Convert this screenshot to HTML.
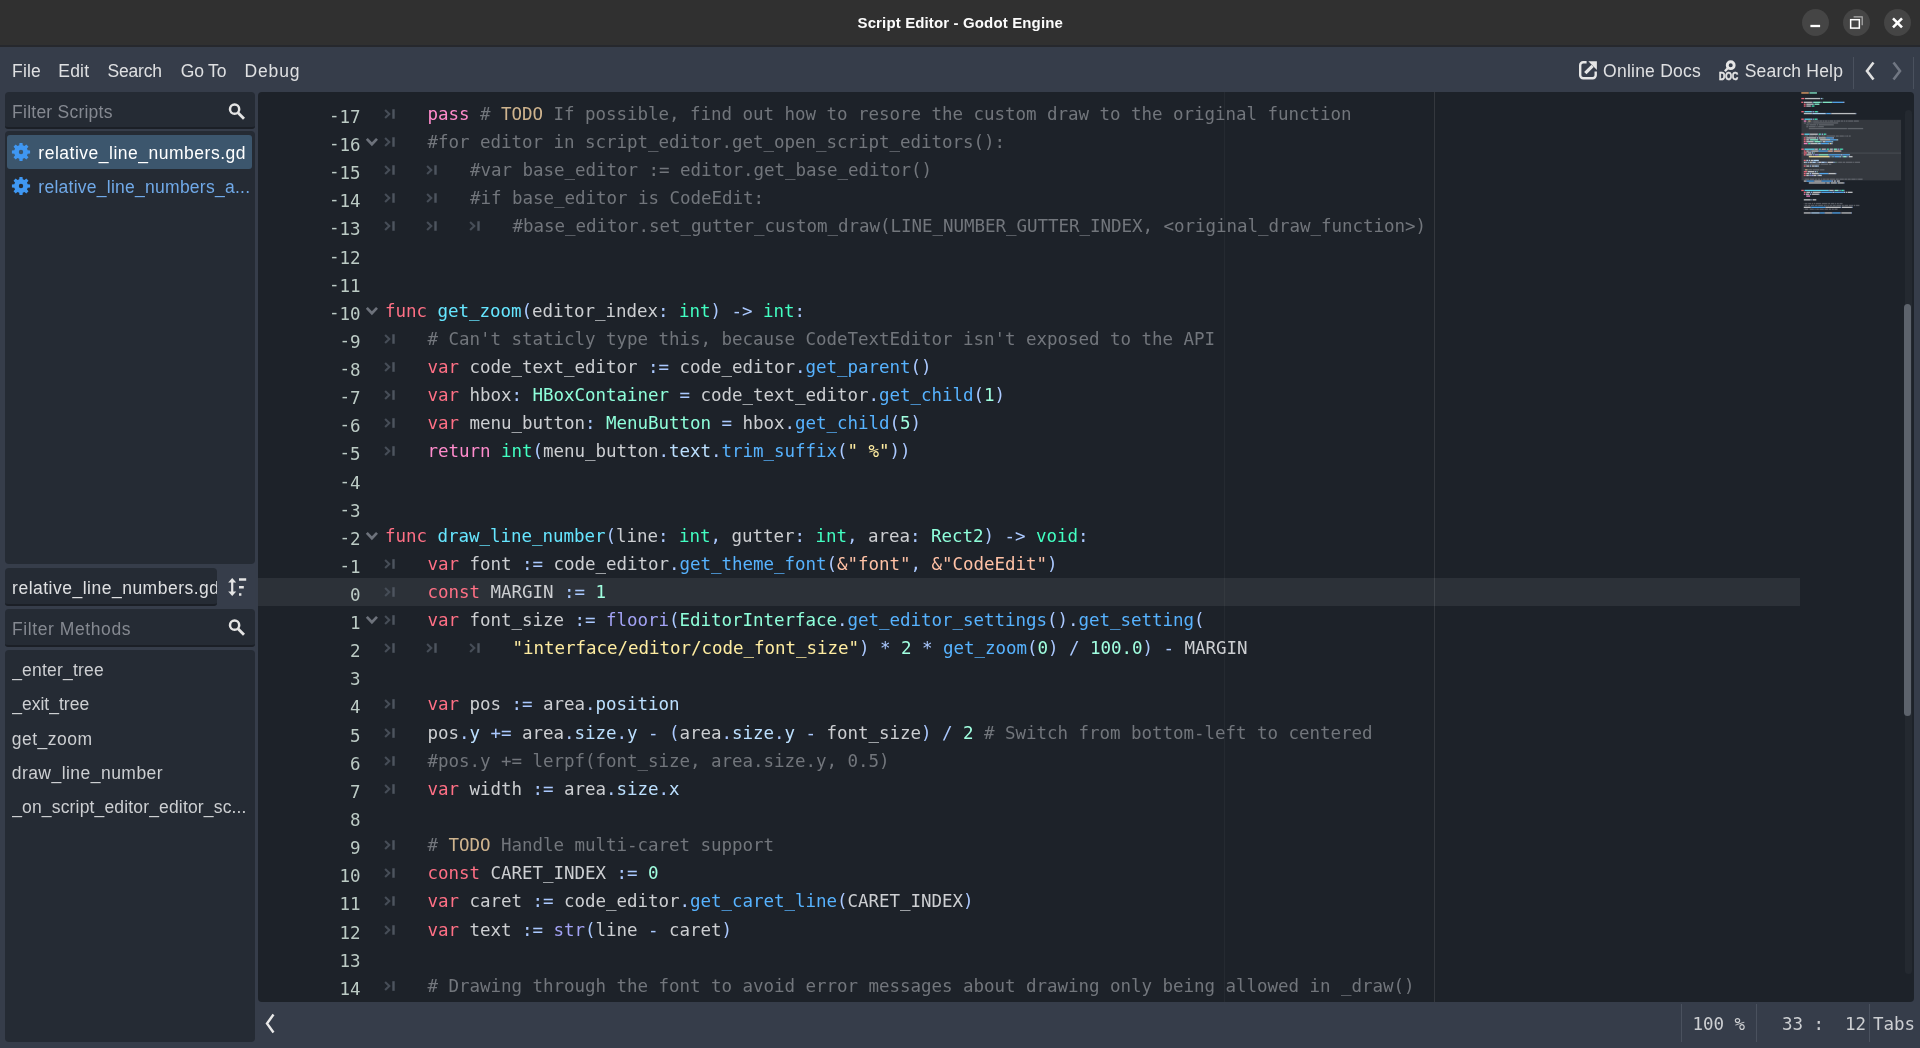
<!DOCTYPE html>
<html lang="en"><head><meta charset="utf-8"><title>Script Editor - Godot Engine</title>
<style>
*{box-sizing:border-box;margin:0;padding:0}
html,body{width:1920px;height:1048px;overflow:hidden;background:#363d4a}
body{position:relative;font-family:"Liberation Sans", sans-serif;font-size:17.5px;color:#cdcfd2}
#root{position:absolute;left:0;top:0;width:1920px;height:1048px;will-change:transform}
.abs{position:absolute}
.ux{position:absolute;line-height:24px;height:24px;white-space:pre}
#title{position:absolute;left:0;top:0;width:1920px;height:45px;background:#303030}
#tline{position:absolute;left:0;top:45px;width:1920px;height:2px;background:#26282d}
.wb{position:absolute;top:9px;width:27px;height:27px;border-radius:50%;background:#454545}
.wb svg{position:absolute;left:0;top:0}
.panel{position:absolute;background:#252b34;border-radius:4px}
.le{position:absolute;background:#252b34;border-radius:4px 4px 3px 3px;border-bottom:2px solid #1b1f26}
#ed{position:absolute;left:258px;top:92px;width:1656px;height:910px;background:#1d2229;border-radius:4px;overflow:hidden}
#edi{position:absolute;left:-258px;top:-92px;width:1920px;height:1048px;font-family:"DejaVu Sans Mono", "Liberation Mono", monospace;font-size:17.5px;letter-spacing:-0.036px}
.cl{position:absolute;height:28px;line-height:28px;white-space:pre}
.ln{position:absolute;left:260px;width:100.5px;text-align:right;height:28px;line-height:28px;white-space:pre;color:#bccbc5}
.mn{position:relative;top:-1.3px}
.tb,.fd{position:absolute}
.t{color:#cdcfd2}.k{color:#ff7085}.c{color:#ff8ccc}.m{color:#72767c}.w{color:#cfb48e}.d{color:#66e6ff}
.b{color:#42ffc2}.e{color:#8fffdb}.f{color:#57b3ff}.s{color:#abc9ff}.n{color:#a1ffe0}.g{color:#ffeda1}
.q{color:#ffc2a6}.u{color:#a3a3f5}.v{color:#bce0ff}
.st{position:absolute;top:1009.5px;line-height:28px;font-family:"DejaVu Sans Mono", "Liberation Mono", monospace;font-size:17.5px;letter-spacing:-0.036px;color:#cdcfd2;white-space:pre}
.vs{position:absolute;width:1px;background:#4a515e}
</style></head><body><div id="root">
<div id="title">
<div class="wb" style="left:1802px"><svg width="27" height="27" viewBox="0 0 27 27"><path d="M8.4 17h9.7" stroke="#fff" stroke-width="2.3"/></svg></div>
<div class="wb" style="left:1843px"><svg width="27" height="27" viewBox="0 0 27 27"><rect x="7.65" y="10.7" width="8.7" height="8.4" fill="none" stroke="#fff" stroke-width="1.5"/><path d="M10.6 7.9h8.6v8.4" fill="none" stroke="#b0b0b0" stroke-width="1.2"/></svg></div>
<div class="wb" style="left:1884px"><svg width="27" height="27" viewBox="0 0 27 27"><path d="M9 9.3 18 18.3M18 9.3 9 18.3" stroke="#fff" stroke-width="2.6"/></svg></div>
</div>
<div class="ux" style="left:857.50px;top:11px;font-size:15px;font-weight:bold;letter-spacing:0.136px;color:#fcfcfc;">Script Editor - Godot Engine</div>
<div id="tline"></div>

<!-- menu bar -->
<div class="ux" style="left:12.10px;top:59px;font-size:17.5px;font-weight:normal;letter-spacing:0.111px;color:#dfe0e2;">File</div>
<div class="ux" style="left:58.30px;top:59px;font-size:17.5px;font-weight:normal;letter-spacing:0.202px;color:#dfe0e2;">Edit</div>
<div class="ux" style="left:107.40px;top:59px;font-size:17.5px;font-weight:normal;letter-spacing:-0.163px;color:#dfe0e2;">Search</div>
<div class="ux" style="left:180.80px;top:59px;font-size:17.5px;font-weight:normal;letter-spacing:-0.189px;color:#dfe0e2;">Go To</div>
<div class="ux" style="left:244.50px;top:59px;font-size:17.5px;font-weight:normal;letter-spacing:0.866px;color:#dfe0e2;">Debug</div>
<svg class="abs" style="left:1578.6px;top:60.8px" width="19" height="19" viewBox="0 0 19 19"><path d="M7.6 1.3H4.2A3 3 0 0 0 1.2 4.3V14.2A3 3 0 0 0 4.2 17.2H13.7A3 3 0 0 0 16.7 14.2V10.4" fill="none" stroke="#e6e6e6" stroke-width="2.4"/><path d="M9.3 0.3H17.9V9.1z" fill="#e6e6e6"/><path d="M6.3 12.1 13.6 4.8" stroke="#e6e6e6" stroke-width="3.3"/></svg>
<div class="ux" style="left:1603.10px;top:59px;font-size:17.5px;font-weight:normal;letter-spacing:0.233px;color:#dfe0e2;">Online Docs</div>
<svg class="abs" style="left:1718px;top:59px" width="22" height="23" viewBox="0 0 22 23"><circle cx="12.7" cy="6.2" r="3.45" fill="none" stroke="#e6e6e6" stroke-width="2.9"/><path d="M10.2 8.8 6.9 12.3" stroke="#e6e6e6" stroke-width="2.4"/><text x="1.1" y="21.2" font-family="Liberation Sans, sans-serif" font-weight="bold" font-size="10" fill="#e6e6e6" stroke="#e6e6e6" stroke-width="0.5" textLength="19.3" lengthAdjust="spacingAndGlyphs">DOC</text></svg>
<div class="ux" style="left:1744.70px;top:59px;font-size:17.5px;font-weight:normal;letter-spacing:0.193px;color:#dfe0e2;">Search Help</div>
<div class="vs" style="left:1853px;top:57px;height:32px"></div>
<div class="vs" style="left:1913px;top:57px;height:32px"></div>
<svg class="abs" style="left:1863px;top:60px" width="14" height="22" viewBox="0 0 14 22"><path d="M10.5 2.5 4 11l6.5 8.5" fill="none" stroke="#e0e0e0" stroke-width="2.6"/></svg>
<svg class="abs" style="left:1890px;top:60px" width="14" height="22" viewBox="0 0 14 22"><path d="M3.5 2.5 10 11l-6.5 8.5" fill="none" stroke="#717783" stroke-width="2.6"/></svg>

<!-- left column -->
<div class="le" style="left:5px;top:92px;width:250px;height:37px"></div>
<div class="ux" style="left:12.10px;top:100px;font-size:17.5px;font-weight:normal;letter-spacing:0.240px;color:#858991;">Filter Scripts</div>
<svg class="abs" style="left:227px;top:102px" width="20" height="20" viewBox="0 0 20 20"><circle cx="7.6" cy="7.2" r="4.6" fill="none" stroke="#e4e4e4" stroke-width="2.5"/><path d="M11 10.8 17 16.8" stroke="#e4e4e4" stroke-width="2.9"/></svg>
<div class="panel" style="left:5px;top:131px;width:250px;height:433px"></div>
<div class="abs" style="left:7px;top:135px;width:245px;height:34px;background:#3c566d;border-radius:3px"></div>
<svg class="abs" style="left:11.3px;top:142px" width="20" height="20" viewBox="0 0 20 20"><path fill-rule="evenodd" fill="#3f97f2" d="M16.67 8.23 L19.08 8.49 L19.08 11.51 L16.67 11.77 L15.97 13.47 L17.49 15.35 L15.35 17.49 L13.47 15.97 L11.77 16.67 L11.51 19.08 L8.49 19.08 L8.23 16.67 L6.53 15.97 L4.65 17.49 L2.51 15.35 L4.03 13.47 L3.33 11.77 L0.92 11.51 L0.92 8.49 L3.33 8.23 L4.03 6.53 L2.51 4.65 L4.65 2.51 L6.53 4.03 L8.23 3.33 L8.49 0.92 L11.51 0.92 L11.77 3.33 L13.47 4.03 L15.35 2.51 L17.49 4.65 L15.97 6.53Z M12.20 10.00 A2.2 2.2 0 1 0 7.80 10.00 A2.2 2.2 0 1 0 12.20 10.00Z"/></svg>
<div class="ux" style="left:38.30px;top:141px;font-size:17.5px;font-weight:normal;letter-spacing:0.509px;color:#fff;">relative_line_numbers.gd</div>
<svg class="abs" style="left:11.3px;top:176.2px" width="20" height="20" viewBox="0 0 20 20"><path fill-rule="evenodd" fill="#3f97f2" d="M16.67 8.23 L19.08 8.49 L19.08 11.51 L16.67 11.77 L15.97 13.47 L17.49 15.35 L15.35 17.49 L13.47 15.97 L11.77 16.67 L11.51 19.08 L8.49 19.08 L8.23 16.67 L6.53 15.97 L4.65 17.49 L2.51 15.35 L4.03 13.47 L3.33 11.77 L0.92 11.51 L0.92 8.49 L3.33 8.23 L4.03 6.53 L2.51 4.65 L4.65 2.51 L6.53 4.03 L8.23 3.33 L8.49 0.92 L11.51 0.92 L11.77 3.33 L13.47 4.03 L15.35 2.51 L17.49 4.65 L15.97 6.53Z M12.20 10.00 A2.2 2.2 0 1 0 7.80 10.00 A2.2 2.2 0 1 0 12.20 10.00Z"/></svg>
<div class="ux" style="left:38.30px;top:175px;font-size:17.5px;font-weight:normal;letter-spacing:0.260px;color:#70a9e8;">relative_line_numbers_a...</div>

<div class="le" style="left:5px;top:568px;width:212px;height:38px"></div>
<div class="abs" style="left:5px;top:570px;width:212px;height:34px;overflow:hidden"><div class="abs" style="left:-5px;top:-570px;width:300px;height:700px">
<div class="ux" style="left:12.10px;top:576px;font-size:17.5px;font-weight:normal;letter-spacing:0.496px;color:#dfe0e2;">relative_line_numbers.gd</div>
</div></div>
<svg class="abs" style="left:226px;top:576px" width="22" height="22" viewBox="0 0 22 22"><path d="M6.2 2 2.2 6.6h2.9v8.8H2.2L6.2 20l4-4.6H7.3V6.6h2.9z" fill="#e4e4e4"/><path d="M13 3.6h7.2M13 11.2h4.8M13 18.6h2.4" stroke="#e4e4e4" stroke-width="2.5"/></svg>
<div class="le" style="left:5px;top:609px;width:250px;height:38px"></div>
<div class="ux" style="left:12.10px;top:617px;font-size:17.5px;font-weight:normal;letter-spacing:0.575px;color:#858991;">Filter Methods</div>
<svg class="abs" style="left:227px;top:618px" width="20" height="20" viewBox="0 0 20 20"><circle cx="7.6" cy="7.2" r="4.6" fill="none" stroke="#e4e4e4" stroke-width="2.5"/><path d="M11 10.8 17 16.8" stroke="#e4e4e4" stroke-width="2.9"/></svg>
<div class="panel" style="left:5px;top:650px;width:250px;height:392px"></div>
<div class="ux" style="left:12.20px;top:658px;font-size:17.5px;font-weight:normal;letter-spacing:0.202px;color:#cdcfd2;">_enter_tree</div>
<div class="ux" style="left:12.20px;top:692px;font-size:17.5px;font-weight:normal;letter-spacing:0.009px;color:#cdcfd2;">_exit_tree</div>
<div class="ux" style="left:11.70px;top:727px;font-size:17.5px;font-weight:normal;letter-spacing:0.489px;color:#cdcfd2;">get_zoom</div>
<div class="ux" style="left:11.70px;top:761px;font-size:17.5px;font-weight:normal;letter-spacing:0.464px;color:#cdcfd2;">draw_line_number</div>
<div class="ux" style="left:12.20px;top:795px;font-size:17.5px;font-weight:normal;letter-spacing:0.162px;color:#cdcfd2;">_on_script_editor_editor_sc...</div>

<!-- code editor -->
<div id="ed"><div id="edi">
<div class="abs" style="left:258px;top:578px;width:1542px;height:28px;background:rgba(255,255,255,0.07)"></div>
<div class="abs" style="left:1224px;top:92px;width:1px;height:910px;background:rgba(255,255,255,0.04)"></div>
<div class="abs" style="left:1434px;top:92px;width:1px;height:910px;background:rgba(255,255,255,0.10)"></div>
<div class="ln" style="top:102.5px"><span class="mn">-</span>17</div>
<svg class="tb" style="left:383.8px;top:107.6px" width="12" height="12" viewBox="0 0 12 12"><path d="M1.1 1.9 5.3 6 1.1 10.1" fill="none" stroke="#464d57" stroke-width="2.1"/><path d="M9.5 1.2v9.6" stroke="#4e555f" stroke-width="2.4"/></svg>
<div class="cl" style="top:100px;left:427.5px"><span class="c">pass</span><span class="t"> </span><span class="m"># </span><span class="w">TODO</span><span class="m"> If possible, find out how to resore the custom draw to the original function</span></div>
<div class="ln" style="top:130.5px"><span class="mn">-</span>16</div>
<svg class="fd" style="left:365px;top:137px" width="14" height="11" viewBox="0 0 14 11"><path d="M1.8 1.9 6.9 7.3 12 1.9" fill="none" stroke="#6d727b" stroke-width="2.7"/></svg>
<svg class="tb" style="left:383.8px;top:135.6px" width="12" height="12" viewBox="0 0 12 12"><path d="M1.1 1.9 5.3 6 1.1 10.1" fill="none" stroke="#464d57" stroke-width="2.1"/><path d="M9.5 1.2v9.6" stroke="#4e555f" stroke-width="2.4"/></svg>
<div class="cl" style="top:128px;left:427.5px"><span class="m">#for editor in script_editor.get_open_script_editors():</span></div>
<div class="ln" style="top:158.5px"><span class="mn">-</span>15</div>
<svg class="tb" style="left:383.8px;top:163.6px" width="12" height="12" viewBox="0 0 12 12"><path d="M1.1 1.9 5.3 6 1.1 10.1" fill="none" stroke="#464d57" stroke-width="2.1"/><path d="M9.5 1.2v9.6" stroke="#4e555f" stroke-width="2.4"/></svg>
<svg class="tb" style="left:426.3px;top:163.6px" width="12" height="12" viewBox="0 0 12 12"><path d="M1.1 1.9 5.3 6 1.1 10.1" fill="none" stroke="#464d57" stroke-width="2.1"/><path d="M9.5 1.2v9.6" stroke="#4e555f" stroke-width="2.4"/></svg>
<div class="cl" style="top:156px;left:470.0px"><span class="m">#var base_editor := editor.get_base_editor()</span></div>
<div class="ln" style="top:186.5px"><span class="mn">-</span>14</div>
<svg class="tb" style="left:383.8px;top:191.6px" width="12" height="12" viewBox="0 0 12 12"><path d="M1.1 1.9 5.3 6 1.1 10.1" fill="none" stroke="#464d57" stroke-width="2.1"/><path d="M9.5 1.2v9.6" stroke="#4e555f" stroke-width="2.4"/></svg>
<svg class="tb" style="left:426.3px;top:191.6px" width="12" height="12" viewBox="0 0 12 12"><path d="M1.1 1.9 5.3 6 1.1 10.1" fill="none" stroke="#464d57" stroke-width="2.1"/><path d="M9.5 1.2v9.6" stroke="#4e555f" stroke-width="2.4"/></svg>
<div class="cl" style="top:184px;left:470.0px"><span class="m">#if base_editor is CodeEdit:</span></div>
<div class="ln" style="top:214.5px"><span class="mn">-</span>13</div>
<svg class="tb" style="left:383.8px;top:219.6px" width="12" height="12" viewBox="0 0 12 12"><path d="M1.1 1.9 5.3 6 1.1 10.1" fill="none" stroke="#464d57" stroke-width="2.1"/><path d="M9.5 1.2v9.6" stroke="#4e555f" stroke-width="2.4"/></svg>
<svg class="tb" style="left:426.3px;top:219.6px" width="12" height="12" viewBox="0 0 12 12"><path d="M1.1 1.9 5.3 6 1.1 10.1" fill="none" stroke="#464d57" stroke-width="2.1"/><path d="M9.5 1.2v9.6" stroke="#4e555f" stroke-width="2.4"/></svg>
<svg class="tb" style="left:468.8px;top:219.6px" width="12" height="12" viewBox="0 0 12 12"><path d="M1.1 1.9 5.3 6 1.1 10.1" fill="none" stroke="#464d57" stroke-width="2.1"/><path d="M9.5 1.2v9.6" stroke="#4e555f" stroke-width="2.4"/></svg>
<div class="cl" style="top:212px;left:512.5px"><span class="m">#base_editor.set_gutter_custom_draw(LINE_NUMBER_GUTTER_INDEX, &lt;original_draw_function&gt;)</span></div>
<div class="ln" style="top:243.5px"><span class="mn">-</span>12</div>
<div class="ln" style="top:271.5px"><span class="mn">-</span>11</div>
<div class="ln" style="top:299.5px"><span class="mn">-</span>10</div>
<svg class="fd" style="left:365px;top:306px" width="14" height="11" viewBox="0 0 14 11"><path d="M1.8 1.9 6.9 7.3 12 1.9" fill="none" stroke="#6d727b" stroke-width="2.7"/></svg>
<div class="cl" style="top:297px;left:385.0px"><span class="k">func</span><span class="t"> </span><span class="d">get_zoom</span><span class="s">(</span><span class="t">editor_index</span><span class="s">:</span><span class="t"> </span><span class="b">int</span><span class="s">)</span><span class="t"> </span><span class="s">-&gt;</span><span class="t"> </span><span class="b">int</span><span class="s">:</span></div>
<div class="ln" style="top:327.5px"><span class="mn">-</span>9</div>
<svg class="tb" style="left:383.8px;top:332.6px" width="12" height="12" viewBox="0 0 12 12"><path d="M1.1 1.9 5.3 6 1.1 10.1" fill="none" stroke="#464d57" stroke-width="2.1"/><path d="M9.5 1.2v9.6" stroke="#4e555f" stroke-width="2.4"/></svg>
<div class="cl" style="top:325px;left:427.5px"><span class="m"># Can't staticly type this, because CodeTextEditor isn't exposed to the API</span></div>
<div class="ln" style="top:355.5px"><span class="mn">-</span>8</div>
<svg class="tb" style="left:383.8px;top:360.6px" width="12" height="12" viewBox="0 0 12 12"><path d="M1.1 1.9 5.3 6 1.1 10.1" fill="none" stroke="#464d57" stroke-width="2.1"/><path d="M9.5 1.2v9.6" stroke="#4e555f" stroke-width="2.4"/></svg>
<div class="cl" style="top:353px;left:427.5px"><span class="k">var</span><span class="t"> code_text_editor </span><span class="s">:=</span><span class="t"> code_editor</span><span class="s">.</span><span class="f">get_parent</span><span class="s">()</span></div>
<div class="ln" style="top:383.5px"><span class="mn">-</span>7</div>
<svg class="tb" style="left:383.8px;top:388.6px" width="12" height="12" viewBox="0 0 12 12"><path d="M1.1 1.9 5.3 6 1.1 10.1" fill="none" stroke="#464d57" stroke-width="2.1"/><path d="M9.5 1.2v9.6" stroke="#4e555f" stroke-width="2.4"/></svg>
<div class="cl" style="top:381px;left:427.5px"><span class="k">var</span><span class="t"> hbox</span><span class="s">:</span><span class="t"> </span><span class="e">HBoxContainer</span><span class="t"> </span><span class="s">=</span><span class="t"> code_text_editor</span><span class="s">.</span><span class="f">get_child</span><span class="s">(</span><span class="n">1</span><span class="s">)</span></div>
<div class="ln" style="top:411.5px"><span class="mn">-</span>6</div>
<svg class="tb" style="left:383.8px;top:416.6px" width="12" height="12" viewBox="0 0 12 12"><path d="M1.1 1.9 5.3 6 1.1 10.1" fill="none" stroke="#464d57" stroke-width="2.1"/><path d="M9.5 1.2v9.6" stroke="#4e555f" stroke-width="2.4"/></svg>
<div class="cl" style="top:409px;left:427.5px"><span class="k">var</span><span class="t"> menu_button</span><span class="s">:</span><span class="t"> </span><span class="e">MenuButton</span><span class="t"> </span><span class="s">=</span><span class="t"> hbox</span><span class="s">.</span><span class="f">get_child</span><span class="s">(</span><span class="n">5</span><span class="s">)</span></div>
<div class="ln" style="top:439.5px"><span class="mn">-</span>5</div>
<svg class="tb" style="left:383.8px;top:444.6px" width="12" height="12" viewBox="0 0 12 12"><path d="M1.1 1.9 5.3 6 1.1 10.1" fill="none" stroke="#464d57" stroke-width="2.1"/><path d="M9.5 1.2v9.6" stroke="#4e555f" stroke-width="2.4"/></svg>
<div class="cl" style="top:437px;left:427.5px"><span class="c">return</span><span class="t"> </span><span class="b">int</span><span class="s">(</span><span class="t">menu_button</span><span class="s">.</span><span class="v">text</span><span class="s">.</span><span class="f">trim_suffix</span><span class="s">(</span><span class="g">" %"</span><span class="s">))</span></div>
<div class="ln" style="top:468.5px"><span class="mn">-</span>4</div>
<div class="ln" style="top:496.5px"><span class="mn">-</span>3</div>
<div class="ln" style="top:524.5px"><span class="mn">-</span>2</div>
<svg class="fd" style="left:365px;top:531px" width="14" height="11" viewBox="0 0 14 11"><path d="M1.8 1.9 6.9 7.3 12 1.9" fill="none" stroke="#6d727b" stroke-width="2.7"/></svg>
<div class="cl" style="top:522px;left:385.0px"><span class="k">func</span><span class="t"> </span><span class="d">draw_line_number</span><span class="s">(</span><span class="t">line</span><span class="s">:</span><span class="t"> </span><span class="b">int</span><span class="s">,</span><span class="t"> gutter</span><span class="s">:</span><span class="t"> </span><span class="b">int</span><span class="s">,</span><span class="t"> area</span><span class="s">:</span><span class="t"> </span><span class="e">Rect2</span><span class="s">)</span><span class="t"> </span><span class="s">-&gt;</span><span class="t"> </span><span class="b">void</span><span class="s">:</span></div>
<div class="ln" style="top:552.5px"><span class="mn">-</span>1</div>
<svg class="tb" style="left:383.8px;top:557.6px" width="12" height="12" viewBox="0 0 12 12"><path d="M1.1 1.9 5.3 6 1.1 10.1" fill="none" stroke="#464d57" stroke-width="2.1"/><path d="M9.5 1.2v9.6" stroke="#4e555f" stroke-width="2.4"/></svg>
<div class="cl" style="top:550px;left:427.5px"><span class="k">var</span><span class="t"> font </span><span class="s">:=</span><span class="t"> code_editor</span><span class="s">.</span><span class="f">get_theme_font</span><span class="s">(</span><span class="q">&amp;"font"</span><span class="s">,</span><span class="t"> </span><span class="q">&amp;"CodeEdit"</span><span class="s">)</span></div>
<div class="ln" style="top:580.5px">0</div>
<svg class="tb" style="left:383.8px;top:585.6px" width="12" height="12" viewBox="0 0 12 12"><path d="M1.1 1.9 5.3 6 1.1 10.1" fill="none" stroke="#464d57" stroke-width="2.1"/><path d="M9.5 1.2v9.6" stroke="#4e555f" stroke-width="2.4"/></svg>
<div class="cl" style="top:578px;left:427.5px"><span class="k">const</span><span class="t"> MARGIN </span><span class="s">:=</span><span class="t"> </span><span class="n">1</span></div>
<div class="ln" style="top:608.5px">1</div>
<svg class="fd" style="left:365px;top:615px" width="14" height="11" viewBox="0 0 14 11"><path d="M1.8 1.9 6.9 7.3 12 1.9" fill="none" stroke="#6d727b" stroke-width="2.7"/></svg>
<svg class="tb" style="left:383.8px;top:613.6px" width="12" height="12" viewBox="0 0 12 12"><path d="M1.1 1.9 5.3 6 1.1 10.1" fill="none" stroke="#464d57" stroke-width="2.1"/><path d="M9.5 1.2v9.6" stroke="#4e555f" stroke-width="2.4"/></svg>
<div class="cl" style="top:606px;left:427.5px"><span class="k">var</span><span class="t"> font_size </span><span class="s">:=</span><span class="t"> </span><span class="u">floori</span><span class="s">(</span><span class="e">EditorInterface</span><span class="s">.</span><span class="f">get_editor_settings</span><span class="s">().</span><span class="f">get_setting</span><span class="s">(</span></div>
<div class="ln" style="top:636.5px">2</div>
<svg class="tb" style="left:383.8px;top:641.6px" width="12" height="12" viewBox="0 0 12 12"><path d="M1.1 1.9 5.3 6 1.1 10.1" fill="none" stroke="#464d57" stroke-width="2.1"/><path d="M9.5 1.2v9.6" stroke="#4e555f" stroke-width="2.4"/></svg>
<svg class="tb" style="left:426.3px;top:641.6px" width="12" height="12" viewBox="0 0 12 12"><path d="M1.1 1.9 5.3 6 1.1 10.1" fill="none" stroke="#464d57" stroke-width="2.1"/><path d="M9.5 1.2v9.6" stroke="#4e555f" stroke-width="2.4"/></svg>
<svg class="tb" style="left:468.8px;top:641.6px" width="12" height="12" viewBox="0 0 12 12"><path d="M1.1 1.9 5.3 6 1.1 10.1" fill="none" stroke="#464d57" stroke-width="2.1"/><path d="M9.5 1.2v9.6" stroke="#4e555f" stroke-width="2.4"/></svg>
<div class="cl" style="top:634px;left:512.5px"><span class="g">"interface/editor/code_font_size"</span><span class="s">)</span><span class="t"> </span><span class="s">*</span><span class="t"> </span><span class="n">2</span><span class="t"> </span><span class="s">*</span><span class="t"> </span><span class="f">get_zoom</span><span class="s">(</span><span class="n">0</span><span class="s">)</span><span class="t"> </span><span class="s">/</span><span class="t"> </span><span class="n">100.0</span><span class="s">)</span><span class="t"> </span><span class="s">-</span><span class="t"> MARGIN</span></div>
<div class="ln" style="top:664.5px">3</div>
<div class="ln" style="top:692.5px">4</div>
<svg class="tb" style="left:383.8px;top:697.6px" width="12" height="12" viewBox="0 0 12 12"><path d="M1.1 1.9 5.3 6 1.1 10.1" fill="none" stroke="#464d57" stroke-width="2.1"/><path d="M9.5 1.2v9.6" stroke="#4e555f" stroke-width="2.4"/></svg>
<div class="cl" style="top:690px;left:427.5px"><span class="k">var</span><span class="t"> pos </span><span class="s">:=</span><span class="t"> area</span><span class="s">.</span><span class="v">position</span></div>
<div class="ln" style="top:721.5px">5</div>
<svg class="tb" style="left:383.8px;top:726.6px" width="12" height="12" viewBox="0 0 12 12"><path d="M1.1 1.9 5.3 6 1.1 10.1" fill="none" stroke="#464d57" stroke-width="2.1"/><path d="M9.5 1.2v9.6" stroke="#4e555f" stroke-width="2.4"/></svg>
<div class="cl" style="top:719px;left:427.5px"><span class="t">pos</span><span class="s">.</span><span class="v">y</span><span class="t"> </span><span class="s">+=</span><span class="t"> area</span><span class="s">.</span><span class="v">size</span><span class="s">.</span><span class="v">y</span><span class="t"> </span><span class="s">-</span><span class="t"> </span><span class="s">(</span><span class="t">area</span><span class="s">.</span><span class="v">size</span><span class="s">.</span><span class="v">y</span><span class="t"> </span><span class="s">-</span><span class="t"> font_size</span><span class="s">)</span><span class="t"> </span><span class="s">/</span><span class="t"> </span><span class="n">2</span><span class="t"> </span><span class="m"># Switch from bottom-left to centered</span></div>
<div class="ln" style="top:749.5px">6</div>
<svg class="tb" style="left:383.8px;top:754.6px" width="12" height="12" viewBox="0 0 12 12"><path d="M1.1 1.9 5.3 6 1.1 10.1" fill="none" stroke="#464d57" stroke-width="2.1"/><path d="M9.5 1.2v9.6" stroke="#4e555f" stroke-width="2.4"/></svg>
<div class="cl" style="top:747px;left:427.5px"><span class="m">#pos.y += lerpf(font_size, area.size.y, 0.5)</span></div>
<div class="ln" style="top:777.5px">7</div>
<svg class="tb" style="left:383.8px;top:782.6px" width="12" height="12" viewBox="0 0 12 12"><path d="M1.1 1.9 5.3 6 1.1 10.1" fill="none" stroke="#464d57" stroke-width="2.1"/><path d="M9.5 1.2v9.6" stroke="#4e555f" stroke-width="2.4"/></svg>
<div class="cl" style="top:775px;left:427.5px"><span class="k">var</span><span class="t"> width </span><span class="s">:=</span><span class="t"> area</span><span class="s">.</span><span class="v">size</span><span class="s">.</span><span class="v">x</span></div>
<div class="ln" style="top:805.5px">8</div>
<div class="ln" style="top:833.5px">9</div>
<svg class="tb" style="left:383.8px;top:838.6px" width="12" height="12" viewBox="0 0 12 12"><path d="M1.1 1.9 5.3 6 1.1 10.1" fill="none" stroke="#464d57" stroke-width="2.1"/><path d="M9.5 1.2v9.6" stroke="#4e555f" stroke-width="2.4"/></svg>
<div class="cl" style="top:831px;left:427.5px"><span class="m"># </span><span class="w">TODO</span><span class="m"> Handle multi-caret support</span></div>
<div class="ln" style="top:861.5px">10</div>
<svg class="tb" style="left:383.8px;top:866.6px" width="12" height="12" viewBox="0 0 12 12"><path d="M1.1 1.9 5.3 6 1.1 10.1" fill="none" stroke="#464d57" stroke-width="2.1"/><path d="M9.5 1.2v9.6" stroke="#4e555f" stroke-width="2.4"/></svg>
<div class="cl" style="top:859px;left:427.5px"><span class="k">const</span><span class="t"> CARET_INDEX </span><span class="s">:=</span><span class="t"> </span><span class="n">0</span></div>
<div class="ln" style="top:889.5px">11</div>
<svg class="tb" style="left:383.8px;top:894.6px" width="12" height="12" viewBox="0 0 12 12"><path d="M1.1 1.9 5.3 6 1.1 10.1" fill="none" stroke="#464d57" stroke-width="2.1"/><path d="M9.5 1.2v9.6" stroke="#4e555f" stroke-width="2.4"/></svg>
<div class="cl" style="top:887px;left:427.5px"><span class="k">var</span><span class="t"> caret </span><span class="s">:=</span><span class="t"> code_editor</span><span class="s">.</span><span class="f">get_caret_line</span><span class="s">(</span><span class="t">CARET_INDEX</span><span class="s">)</span></div>
<div class="ln" style="top:918.5px">12</div>
<svg class="tb" style="left:383.8px;top:923.6px" width="12" height="12" viewBox="0 0 12 12"><path d="M1.1 1.9 5.3 6 1.1 10.1" fill="none" stroke="#464d57" stroke-width="2.1"/><path d="M9.5 1.2v9.6" stroke="#4e555f" stroke-width="2.4"/></svg>
<div class="cl" style="top:916px;left:427.5px"><span class="k">var</span><span class="t"> text </span><span class="s">:=</span><span class="t"> </span><span class="u">str</span><span class="s">(</span><span class="t">line </span><span class="s">-</span><span class="t"> caret</span><span class="s">)</span></div>
<div class="ln" style="top:946.5px">13</div>
<div class="ln" style="top:974.5px">14</div>
<svg class="tb" style="left:383.8px;top:979.6px" width="12" height="12" viewBox="0 0 12 12"><path d="M1.1 1.9 5.3 6 1.1 10.1" fill="none" stroke="#464d57" stroke-width="2.1"/><path d="M9.5 1.2v9.6" stroke="#4e555f" stroke-width="2.4"/></svg>
<div class="cl" style="top:972px;left:427.5px"><span class="m"># Drawing through the font to avoid error messages about drawing only being allowed in _draw()</span></div>
<svg class="abs" style="left:0;top:0" width="1920" height="1048" viewBox="0 0 1920 1048"><rect x="1801.5" y="119.8" width="99.6" height="60.6" fill="#fff" fill-opacity="0.1"/><rect x="1801.5" y="152.3" width="99.6" height="1.6" fill="#fff" fill-opacity="0.07"/><rect x="1801.30" y="92.30" width="7.50" height="1.3" fill="#ffb373" fill-opacity="0.9"/><rect x="1809.42" y="92.30" width="7.50" height="1.3" fill="#8fffdb" fill-opacity="0.9"/><rect x="1801.30" y="97.92" width="3.12" height="1.3" fill="#ff7085" fill-opacity="0.9"/><rect x="1805.05" y="97.92" width="15.00" height="1.3" fill="#cdcfd2" fill-opacity="0.9"/><rect x="1820.67" y="97.92" width="1.25" height="1.3" fill="#abc9ff" fill-opacity="0.9"/><rect x="1822.55" y="97.92" width="0.62" height="1.3" fill="#a1ffe0" fill-opacity="0.9"/><rect x="1801.30" y="101.67" width="1.88" height="1.3" fill="#ff7085" fill-opacity="0.9"/><rect x="1803.80" y="101.67" width="8.12" height="1.3" fill="#cdcfd2" fill-opacity="0.9"/><rect x="1811.92" y="101.67" width="0.62" height="1.3" fill="#abc9ff" fill-opacity="0.9"/><rect x="1813.17" y="101.67" width="7.50" height="1.3" fill="#8fffdb" fill-opacity="0.9"/><rect x="1821.30" y="101.67" width="0.62" height="1.3" fill="#abc9ff" fill-opacity="0.9"/><rect x="1822.55" y="101.67" width="9.38" height="1.3" fill="#8fffdb" fill-opacity="0.9"/><rect x="1831.92" y="101.67" width="0.62" height="1.3" fill="#abc9ff" fill-opacity="0.9"/><rect x="1832.55" y="101.67" width="10.62" height="1.3" fill="#57b3ff" fill-opacity="0.9"/><rect x="1843.17" y="101.67" width="1.25" height="1.3" fill="#abc9ff" fill-opacity="0.9"/><rect x="1803.80" y="103.55" width="1.88" height="1.3" fill="#ff7085" fill-opacity="0.9"/><rect x="1806.30" y="103.55" width="6.88" height="1.3" fill="#cdcfd2" fill-opacity="0.9"/><rect x="1813.17" y="103.55" width="0.62" height="1.3" fill="#abc9ff" fill-opacity="0.9"/><rect x="1814.42" y="103.55" width="5.00" height="1.3" fill="#8fffdb" fill-opacity="0.9"/><rect x="1803.80" y="105.42" width="1.88" height="1.3" fill="#ff7085" fill-opacity="0.9"/><rect x="1806.30" y="105.42" width="4.38" height="1.3" fill="#cdcfd2" fill-opacity="0.9"/><rect x="1810.67" y="105.42" width="0.62" height="1.3" fill="#abc9ff" fill-opacity="0.9"/><rect x="1811.92" y="105.42" width="2.50" height="1.3" fill="#42ffc2" fill-opacity="0.9"/><rect x="1801.30" y="111.05" width="2.50" height="1.3" fill="#ff7085" fill-opacity="0.9"/><rect x="1804.42" y="111.05" width="6.88" height="1.3" fill="#66e6ff" fill-opacity="0.9"/><rect x="1811.30" y="111.05" width="1.25" height="1.3" fill="#abc9ff" fill-opacity="0.9"/><rect x="1813.17" y="111.05" width="1.25" height="1.3" fill="#abc9ff" fill-opacity="0.9"/><rect x="1815.05" y="111.05" width="2.50" height="1.3" fill="#42ffc2" fill-opacity="0.9"/><rect x="1817.55" y="111.05" width="0.62" height="1.3" fill="#abc9ff" fill-opacity="0.9"/><rect x="1803.80" y="112.92" width="8.12" height="1.3" fill="#cdcfd2" fill-opacity="0.9"/><rect x="1811.92" y="112.92" width="0.62" height="1.3" fill="#abc9ff" fill-opacity="0.9"/><rect x="1812.55" y="112.92" width="13.12" height="1.3" fill="#bce0ff" fill-opacity="0.9"/><rect x="1825.67" y="112.92" width="0.62" height="1.3" fill="#abc9ff" fill-opacity="0.9"/><rect x="1826.30" y="112.92" width="4.38" height="1.3" fill="#57b3ff" fill-opacity="0.9"/><rect x="1830.67" y="112.92" width="0.62" height="1.3" fill="#abc9ff" fill-opacity="0.9"/><rect x="1831.30" y="112.92" width="24.38" height="1.3" fill="#cdcfd2" fill-opacity="0.9"/><rect x="1855.67" y="112.92" width="0.62" height="1.3" fill="#abc9ff" fill-opacity="0.9"/><rect x="1801.30" y="118.55" width="2.50" height="1.3" fill="#ff7085" fill-opacity="0.9"/><rect x="1804.42" y="118.55" width="6.25" height="1.3" fill="#66e6ff" fill-opacity="0.9"/><rect x="1810.67" y="118.55" width="1.25" height="1.3" fill="#abc9ff" fill-opacity="0.9"/><rect x="1812.55" y="118.55" width="1.25" height="1.3" fill="#abc9ff" fill-opacity="0.9"/><rect x="1814.42" y="118.55" width="2.50" height="1.3" fill="#42ffc2" fill-opacity="0.9"/><rect x="1816.92" y="118.55" width="0.62" height="1.3" fill="#abc9ff" fill-opacity="0.9"/><rect x="1803.80" y="180.43" width="2.50" height="1.3" fill="#cdcfd2" fill-opacity="0.9"/><rect x="1806.30" y="180.43" width="0.62" height="1.3" fill="#abc9ff" fill-opacity="0.9"/><rect x="1806.92" y="180.43" width="6.88" height="1.3" fill="#57b3ff" fill-opacity="0.9"/><rect x="1813.80" y="180.43" width="0.62" height="1.3" fill="#abc9ff" fill-opacity="0.9"/><rect x="1814.42" y="180.43" width="6.88" height="1.3" fill="#cdcfd2" fill-opacity="0.9"/><rect x="1821.30" y="180.43" width="0.62" height="1.3" fill="#abc9ff" fill-opacity="0.9"/><rect x="1821.92" y="180.43" width="9.38" height="1.3" fill="#57b3ff" fill-opacity="0.9"/><rect x="1831.30" y="180.43" width="1.88" height="1.3" fill="#abc9ff" fill-opacity="0.9"/><rect x="1833.80" y="180.43" width="1.88" height="1.3" fill="#cdcfd2" fill-opacity="0.9"/><rect x="1835.67" y="180.43" width="0.62" height="1.3" fill="#abc9ff" fill-opacity="0.9"/><rect x="1836.92" y="180.43" width="2.50" height="1.3" fill="#cdcfd2" fill-opacity="0.9"/><rect x="1839.42" y="180.43" width="0.62" height="1.3" fill="#abc9ff" fill-opacity="0.9"/><rect x="1808.80" y="182.30" width="16.25" height="1.3" fill="#cdcfd2" fill-opacity="0.9"/><rect x="1825.05" y="182.30" width="0.62" height="1.3" fill="#abc9ff" fill-opacity="0.9"/><rect x="1826.30" y="182.30" width="3.12" height="1.3" fill="#cdcfd2" fill-opacity="0.9"/><rect x="1829.42" y="182.30" width="0.62" height="1.3" fill="#abc9ff" fill-opacity="0.9"/><rect x="1830.67" y="182.30" width="5.62" height="1.3" fill="#cdcfd2" fill-opacity="0.9"/><rect x="1836.30" y="182.30" width="0.62" height="1.3" fill="#abc9ff" fill-opacity="0.9"/><rect x="1837.55" y="182.30" width="6.25" height="1.3" fill="#cdcfd2" fill-opacity="0.9"/><rect x="1843.80" y="182.30" width="0.62" height="1.3" fill="#abc9ff" fill-opacity="0.9"/><rect x="1801.30" y="189.80" width="2.50" height="1.3" fill="#ff7085" fill-opacity="0.9"/><rect x="1804.42" y="189.80" width="24.38" height="1.3" fill="#66e6ff" fill-opacity="0.9"/><rect x="1828.80" y="189.80" width="0.62" height="1.3" fill="#abc9ff" fill-opacity="0.9"/><rect x="1829.42" y="189.80" width="3.75" height="1.3" fill="#cdcfd2" fill-opacity="0.9"/><rect x="1833.17" y="189.80" width="0.62" height="1.3" fill="#abc9ff" fill-opacity="0.9"/><rect x="1834.42" y="189.80" width="3.75" height="1.3" fill="#8fffdb" fill-opacity="0.9"/><rect x="1838.17" y="189.80" width="0.62" height="1.3" fill="#abc9ff" fill-opacity="0.9"/><rect x="1839.42" y="189.80" width="1.25" height="1.3" fill="#abc9ff" fill-opacity="0.9"/><rect x="1841.30" y="189.80" width="2.50" height="1.3" fill="#42ffc2" fill-opacity="0.9"/><rect x="1843.80" y="189.80" width="0.62" height="1.3" fill="#abc9ff" fill-opacity="0.9"/><rect x="1803.80" y="191.68" width="1.88" height="1.3" fill="#ff7085" fill-opacity="0.9"/><rect x="1806.30" y="191.68" width="3.75" height="1.3" fill="#cdcfd2" fill-opacity="0.9"/><rect x="1810.67" y="191.68" width="1.25" height="1.3" fill="#abc9ff" fill-opacity="0.9"/><rect x="1812.55" y="191.68" width="8.12" height="1.3" fill="#cdcfd2" fill-opacity="0.9"/><rect x="1820.67" y="191.68" width="0.62" height="1.3" fill="#abc9ff" fill-opacity="0.9"/><rect x="1821.30" y="191.68" width="11.25" height="1.3" fill="#57b3ff" fill-opacity="0.9"/><rect x="1832.55" y="191.68" width="1.88" height="1.3" fill="#abc9ff" fill-opacity="0.9"/><rect x="1834.42" y="191.68" width="9.38" height="1.3" fill="#57b3ff" fill-opacity="0.9"/><rect x="1843.80" y="191.68" width="1.25" height="1.3" fill="#abc9ff" fill-opacity="0.9"/><rect x="1845.67" y="191.68" width="1.25" height="1.3" fill="#cdcfd2" fill-opacity="0.9"/><rect x="1847.55" y="191.68" width="5.00" height="1.3" fill="#cdcfd2" fill-opacity="0.9"/><rect x="1803.80" y="193.55" width="1.25" height="1.3" fill="#ff8ccc" fill-opacity="0.9"/><rect x="1805.67" y="193.55" width="3.75" height="1.3" fill="#cdcfd2" fill-opacity="0.9"/><rect x="1810.05" y="193.55" width="1.25" height="1.3" fill="#abc9ff" fill-opacity="0.9"/><rect x="1811.92" y="193.55" width="6.88" height="1.3" fill="#cdcfd2" fill-opacity="0.9"/><rect x="1818.80" y="193.55" width="0.62" height="1.3" fill="#abc9ff" fill-opacity="0.9"/><rect x="1806.30" y="195.43" width="3.75" height="1.3" fill="#ff8ccc" fill-opacity="0.9"/><rect x="1803.80" y="199.18" width="6.88" height="1.3" fill="#cdcfd2" fill-opacity="0.9"/><rect x="1811.30" y="199.18" width="0.62" height="1.3" fill="#abc9ff" fill-opacity="0.9"/><rect x="1812.55" y="199.18" width="3.75" height="1.3" fill="#cdcfd2" fill-opacity="0.9"/><rect x="1803.80" y="202.93" width="0.62" height="1.3" fill="#7d8187" fill-opacity="0.6"/><rect x="1805.05" y="202.93" width="2.50" height="1.3" fill="#7d8187" fill-opacity="0.6"/><rect x="1808.17" y="202.93" width="3.12" height="1.3" fill="#7d8187" fill-opacity="0.6"/><rect x="1811.92" y="202.93" width="1.25" height="1.3" fill="#7d8187" fill-opacity="0.6"/><rect x="1813.80" y="202.93" width="1.25" height="1.3" fill="#7d8187" fill-opacity="0.6"/><rect x="1815.67" y="202.93" width="5.62" height="1.3" fill="#7d8187" fill-opacity="0.6"/><rect x="1821.92" y="202.93" width="5.62" height="1.3" fill="#7d8187" fill-opacity="0.6"/><rect x="1828.17" y="202.93" width="1.88" height="1.3" fill="#7d8187" fill-opacity="0.6"/><rect x="1830.67" y="202.93" width="3.75" height="1.3" fill="#7d8187" fill-opacity="0.6"/><rect x="1835.05" y="202.93" width="1.25" height="1.3" fill="#7d8187" fill-opacity="0.6"/><rect x="1836.92" y="202.93" width="1.88" height="1.3" fill="#7d8187" fill-opacity="0.6"/><rect x="1839.42" y="202.93" width="3.12" height="1.3" fill="#7d8187" fill-opacity="0.6"/><rect x="1803.80" y="204.80" width="0.62" height="1.3" fill="#7d8187" fill-opacity="0.6"/><rect x="1805.05" y="204.80" width="2.50" height="1.3" fill="#7d8187" fill-opacity="0.6"/><rect x="1808.17" y="204.80" width="1.88" height="1.3" fill="#7d8187" fill-opacity="0.6"/><rect x="1810.67" y="204.80" width="3.75" height="1.3" fill="#7d8187" fill-opacity="0.6"/><rect x="1815.05" y="204.80" width="2.50" height="1.3" fill="#7d8187" fill-opacity="0.6"/><rect x="1818.17" y="204.80" width="5.00" height="1.3" fill="#7d8187" fill-opacity="0.6"/><rect x="1823.80" y="204.80" width="1.88" height="1.3" fill="#7d8187" fill-opacity="0.6"/><rect x="1826.30" y="204.80" width="1.25" height="1.3" fill="#7d8187" fill-opacity="0.6"/><rect x="1828.17" y="204.80" width="1.25" height="1.3" fill="#7d8187" fill-opacity="0.6"/><rect x="1830.05" y="204.80" width="1.88" height="1.3" fill="#7d8187" fill-opacity="0.6"/><rect x="1832.55" y="204.80" width="3.12" height="1.3" fill="#7d8187" fill-opacity="0.6"/><rect x="1836.30" y="204.80" width="5.00" height="1.3" fill="#7d8187" fill-opacity="0.6"/><rect x="1841.92" y="204.80" width="1.88" height="1.3" fill="#7d8187" fill-opacity="0.6"/><rect x="1844.42" y="204.80" width="3.75" height="1.3" fill="#7d8187" fill-opacity="0.6"/><rect x="1848.80" y="204.80" width="4.38" height="1.3" fill="#7d8187" fill-opacity="0.6"/><rect x="1853.80" y="204.80" width="1.25" height="1.3" fill="#7d8187" fill-opacity="0.6"/><rect x="1855.67" y="204.80" width="3.75" height="1.3" fill="#7d8187" fill-opacity="0.6"/><rect x="1803.80" y="206.68" width="6.88" height="1.3" fill="#cdcfd2" fill-opacity="0.9"/><rect x="1810.67" y="206.68" width="0.62" height="1.3" fill="#abc9ff" fill-opacity="0.9"/><rect x="1811.30" y="206.68" width="13.75" height="1.3" fill="#57b3ff" fill-opacity="0.9"/><rect x="1825.05" y="206.68" width="0.62" height="1.3" fill="#abc9ff" fill-opacity="0.9"/><rect x="1825.67" y="206.68" width="15.00" height="1.3" fill="#cdcfd2" fill-opacity="0.9"/><rect x="1840.67" y="206.68" width="0.62" height="1.3" fill="#abc9ff" fill-opacity="0.9"/><rect x="1841.92" y="206.68" width="10.00" height="1.3" fill="#cdcfd2" fill-opacity="0.9"/><rect x="1851.92" y="206.68" width="0.62" height="1.3" fill="#abc9ff" fill-opacity="0.9"/><rect x="1803.80" y="208.55" width="0.62" height="1.3" fill="#7d8187" fill-opacity="0.6"/><rect x="1805.05" y="208.55" width="3.12" height="1.3" fill="#7d8187" fill-opacity="0.6"/><rect x="1808.80" y="208.55" width="0.62" height="1.3" fill="#7d8187" fill-opacity="0.6"/><rect x="1810.05" y="208.55" width="3.75" height="1.3" fill="#7d8187" fill-opacity="0.6"/><rect x="1814.42" y="208.55" width="1.25" height="1.3" fill="#7d8187" fill-opacity="0.6"/><rect x="1816.30" y="208.55" width="2.50" height="1.3" fill="#7d8187" fill-opacity="0.6"/><rect x="1819.42" y="208.55" width="4.38" height="1.3" fill="#7d8187" fill-opacity="0.6"/><rect x="1824.42" y="208.55" width="3.75" height="1.3" fill="#7d8187" fill-opacity="0.6"/><rect x="1828.80" y="208.55" width="2.50" height="1.3" fill="#7d8187" fill-opacity="0.6"/><rect x="1831.92" y="208.55" width="1.88" height="1.3" fill="#7d8187" fill-opacity="0.6"/><rect x="1834.42" y="208.55" width="3.12" height="1.3" fill="#7d8187" fill-opacity="0.6"/><rect x="1803.80" y="212.30" width="6.88" height="1.3" fill="#cdcfd2" fill-opacity="0.9"/><rect x="1810.67" y="212.30" width="0.62" height="1.3" fill="#abc9ff" fill-opacity="0.9"/><rect x="1811.30" y="212.30" width="8.12" height="1.3" fill="#bce0ff" fill-opacity="0.9"/><rect x="1819.42" y="212.30" width="0.62" height="1.3" fill="#abc9ff" fill-opacity="0.9"/><rect x="1820.05" y="212.30" width="4.38" height="1.3" fill="#57b3ff" fill-opacity="0.9"/><rect x="1824.42" y="212.30" width="0.62" height="1.3" fill="#abc9ff" fill-opacity="0.9"/><rect x="1825.05" y="212.30" width="6.88" height="1.3" fill="#cdcfd2" fill-opacity="0.9"/><rect x="1831.92" y="212.30" width="0.62" height="1.3" fill="#abc9ff" fill-opacity="0.9"/><rect x="1832.55" y="212.30" width="7.50" height="1.3" fill="#57b3ff" fill-opacity="0.9"/><rect x="1840.05" y="212.30" width="0.62" height="1.3" fill="#abc9ff" fill-opacity="0.9"/><rect x="1841.30" y="212.30" width="10.00" height="1.3" fill="#cdcfd2" fill-opacity="0.9"/><rect x="1851.30" y="212.30" width="0.62" height="1.3" fill="#abc9ff" fill-opacity="0.9"/><rect x="1803.80" y="120.42" width="2.50" height="1.3" fill="#ff8ccc" fill-opacity="0.9"/><rect x="1806.92" y="120.42" width="0.62" height="1.3" fill="#7d8187" fill-opacity="0.6"/><rect x="1808.17" y="120.42" width="2.50" height="1.3" fill="#c9ad88" fill-opacity="0.9"/><rect x="1811.30" y="120.42" width="1.25" height="1.3" fill="#7d8187" fill-opacity="0.6"/><rect x="1813.17" y="120.42" width="5.62" height="1.3" fill="#7d8187" fill-opacity="0.6"/><rect x="1819.42" y="120.42" width="2.50" height="1.3" fill="#7d8187" fill-opacity="0.6"/><rect x="1822.55" y="120.42" width="1.88" height="1.3" fill="#7d8187" fill-opacity="0.6"/><rect x="1825.05" y="120.42" width="1.88" height="1.3" fill="#7d8187" fill-opacity="0.6"/><rect x="1827.55" y="120.42" width="1.25" height="1.3" fill="#7d8187" fill-opacity="0.6"/><rect x="1829.42" y="120.42" width="3.75" height="1.3" fill="#7d8187" fill-opacity="0.6"/><rect x="1833.80" y="120.42" width="1.88" height="1.3" fill="#7d8187" fill-opacity="0.6"/><rect x="1836.30" y="120.42" width="3.75" height="1.3" fill="#7d8187" fill-opacity="0.6"/><rect x="1840.67" y="120.42" width="2.50" height="1.3" fill="#7d8187" fill-opacity="0.6"/><rect x="1843.80" y="120.42" width="1.25" height="1.3" fill="#7d8187" fill-opacity="0.6"/><rect x="1845.67" y="120.42" width="1.88" height="1.3" fill="#7d8187" fill-opacity="0.6"/><rect x="1848.17" y="120.42" width="5.00" height="1.3" fill="#7d8187" fill-opacity="0.6"/><rect x="1853.80" y="120.42" width="5.00" height="1.3" fill="#7d8187" fill-opacity="0.6"/><rect x="1803.80" y="122.30" width="2.50" height="1.3" fill="#7d8187" fill-opacity="0.6"/><rect x="1806.92" y="122.30" width="3.75" height="1.3" fill="#7d8187" fill-opacity="0.6"/><rect x="1811.30" y="122.30" width="1.25" height="1.3" fill="#7d8187" fill-opacity="0.6"/><rect x="1813.17" y="122.30" width="25.00" height="1.3" fill="#7d8187" fill-opacity="0.6"/><rect x="1806.30" y="124.17" width="2.50" height="1.3" fill="#7d8187" fill-opacity="0.6"/><rect x="1809.42" y="124.17" width="6.88" height="1.3" fill="#7d8187" fill-opacity="0.6"/><rect x="1816.92" y="124.17" width="1.25" height="1.3" fill="#7d8187" fill-opacity="0.6"/><rect x="1818.80" y="124.17" width="15.00" height="1.3" fill="#7d8187" fill-opacity="0.6"/><rect x="1806.30" y="126.05" width="1.88" height="1.3" fill="#7d8187" fill-opacity="0.6"/><rect x="1808.80" y="126.05" width="6.88" height="1.3" fill="#7d8187" fill-opacity="0.6"/><rect x="1816.30" y="126.05" width="1.25" height="1.3" fill="#7d8187" fill-opacity="0.6"/><rect x="1818.17" y="126.05" width="5.62" height="1.3" fill="#7d8187" fill-opacity="0.6"/><rect x="1808.80" y="127.92" width="38.12" height="1.3" fill="#7d8187" fill-opacity="0.6"/><rect x="1847.55" y="127.92" width="15.62" height="1.3" fill="#7d8187" fill-opacity="0.6"/><rect x="1801.30" y="133.55" width="2.50" height="1.3" fill="#ff7085" fill-opacity="0.9"/><rect x="1804.42" y="133.55" width="5.00" height="1.3" fill="#66e6ff" fill-opacity="0.9"/><rect x="1809.42" y="133.55" width="0.62" height="1.3" fill="#abc9ff" fill-opacity="0.9"/><rect x="1810.05" y="133.55" width="7.50" height="1.3" fill="#cdcfd2" fill-opacity="0.9"/><rect x="1817.55" y="133.55" width="0.62" height="1.3" fill="#abc9ff" fill-opacity="0.9"/><rect x="1818.80" y="133.55" width="1.88" height="1.3" fill="#42ffc2" fill-opacity="0.9"/><rect x="1820.67" y="133.55" width="0.62" height="1.3" fill="#abc9ff" fill-opacity="0.9"/><rect x="1821.92" y="133.55" width="1.25" height="1.3" fill="#abc9ff" fill-opacity="0.9"/><rect x="1823.80" y="133.55" width="1.88" height="1.3" fill="#42ffc2" fill-opacity="0.9"/><rect x="1825.67" y="133.55" width="0.62" height="1.3" fill="#abc9ff" fill-opacity="0.9"/><rect x="1803.80" y="135.43" width="0.62" height="1.3" fill="#7d8187" fill-opacity="0.6"/><rect x="1805.05" y="135.43" width="3.12" height="1.3" fill="#7d8187" fill-opacity="0.6"/><rect x="1808.80" y="135.43" width="5.00" height="1.3" fill="#7d8187" fill-opacity="0.6"/><rect x="1814.42" y="135.43" width="2.50" height="1.3" fill="#7d8187" fill-opacity="0.6"/><rect x="1817.55" y="135.43" width="3.12" height="1.3" fill="#7d8187" fill-opacity="0.6"/><rect x="1821.30" y="135.43" width="4.38" height="1.3" fill="#7d8187" fill-opacity="0.6"/><rect x="1826.30" y="135.43" width="8.75" height="1.3" fill="#7d8187" fill-opacity="0.6"/><rect x="1835.67" y="135.43" width="3.12" height="1.3" fill="#7d8187" fill-opacity="0.6"/><rect x="1839.42" y="135.43" width="4.38" height="1.3" fill="#7d8187" fill-opacity="0.6"/><rect x="1844.42" y="135.43" width="1.25" height="1.3" fill="#7d8187" fill-opacity="0.6"/><rect x="1846.30" y="135.43" width="1.88" height="1.3" fill="#7d8187" fill-opacity="0.6"/><rect x="1848.80" y="135.43" width="1.88" height="1.3" fill="#7d8187" fill-opacity="0.6"/><rect x="1803.80" y="137.30" width="1.88" height="1.3" fill="#ff7085" fill-opacity="0.9"/><rect x="1806.30" y="137.30" width="10.00" height="1.3" fill="#cdcfd2" fill-opacity="0.9"/><rect x="1816.92" y="137.30" width="1.25" height="1.3" fill="#abc9ff" fill-opacity="0.9"/><rect x="1818.80" y="137.30" width="6.88" height="1.3" fill="#cdcfd2" fill-opacity="0.9"/><rect x="1825.67" y="137.30" width="0.62" height="1.3" fill="#abc9ff" fill-opacity="0.9"/><rect x="1826.30" y="137.30" width="6.25" height="1.3" fill="#57b3ff" fill-opacity="0.9"/><rect x="1832.55" y="137.30" width="1.25" height="1.3" fill="#abc9ff" fill-opacity="0.9"/><rect x="1803.80" y="139.18" width="1.88" height="1.3" fill="#ff7085" fill-opacity="0.9"/><rect x="1806.30" y="139.18" width="2.50" height="1.3" fill="#cdcfd2" fill-opacity="0.9"/><rect x="1808.80" y="139.18" width="0.62" height="1.3" fill="#abc9ff" fill-opacity="0.9"/><rect x="1810.05" y="139.18" width="8.12" height="1.3" fill="#8fffdb" fill-opacity="0.9"/><rect x="1818.80" y="139.18" width="0.62" height="1.3" fill="#abc9ff" fill-opacity="0.9"/><rect x="1820.05" y="139.18" width="10.00" height="1.3" fill="#cdcfd2" fill-opacity="0.9"/><rect x="1830.05" y="139.18" width="0.62" height="1.3" fill="#abc9ff" fill-opacity="0.9"/><rect x="1830.67" y="139.18" width="5.62" height="1.3" fill="#57b3ff" fill-opacity="0.9"/><rect x="1836.30" y="139.18" width="0.62" height="1.3" fill="#abc9ff" fill-opacity="0.9"/><rect x="1836.92" y="139.18" width="0.62" height="1.3" fill="#a1ffe0" fill-opacity="0.9"/><rect x="1837.55" y="139.18" width="0.62" height="1.3" fill="#abc9ff" fill-opacity="0.9"/><rect x="1803.80" y="141.05" width="1.88" height="1.3" fill="#ff7085" fill-opacity="0.9"/><rect x="1806.30" y="141.05" width="6.88" height="1.3" fill="#cdcfd2" fill-opacity="0.9"/><rect x="1813.17" y="141.05" width="0.62" height="1.3" fill="#abc9ff" fill-opacity="0.9"/><rect x="1814.42" y="141.05" width="6.25" height="1.3" fill="#8fffdb" fill-opacity="0.9"/><rect x="1821.30" y="141.05" width="0.62" height="1.3" fill="#abc9ff" fill-opacity="0.9"/><rect x="1822.55" y="141.05" width="2.50" height="1.3" fill="#cdcfd2" fill-opacity="0.9"/><rect x="1825.05" y="141.05" width="0.62" height="1.3" fill="#abc9ff" fill-opacity="0.9"/><rect x="1825.67" y="141.05" width="5.62" height="1.3" fill="#57b3ff" fill-opacity="0.9"/><rect x="1831.30" y="141.05" width="0.62" height="1.3" fill="#abc9ff" fill-opacity="0.9"/><rect x="1831.92" y="141.05" width="0.62" height="1.3" fill="#a1ffe0" fill-opacity="0.9"/><rect x="1832.55" y="141.05" width="0.62" height="1.3" fill="#abc9ff" fill-opacity="0.9"/><rect x="1803.80" y="142.93" width="3.75" height="1.3" fill="#ff8ccc" fill-opacity="0.9"/><rect x="1808.17" y="142.93" width="1.88" height="1.3" fill="#42ffc2" fill-opacity="0.9"/><rect x="1810.05" y="142.93" width="0.62" height="1.3" fill="#abc9ff" fill-opacity="0.9"/><rect x="1810.67" y="142.93" width="6.88" height="1.3" fill="#cdcfd2" fill-opacity="0.9"/><rect x="1817.55" y="142.93" width="0.62" height="1.3" fill="#abc9ff" fill-opacity="0.9"/><rect x="1818.17" y="142.93" width="2.50" height="1.3" fill="#bce0ff" fill-opacity="0.9"/><rect x="1820.67" y="142.93" width="0.62" height="1.3" fill="#abc9ff" fill-opacity="0.9"/><rect x="1821.30" y="142.93" width="6.88" height="1.3" fill="#57b3ff" fill-opacity="0.9"/><rect x="1828.17" y="142.93" width="0.62" height="1.3" fill="#abc9ff" fill-opacity="0.9"/><rect x="1828.80" y="142.93" width="0.62" height="1.3" fill="#ffeda1" fill-opacity="0.9"/><rect x="1830.05" y="142.93" width="1.25" height="1.3" fill="#ffeda1" fill-opacity="0.9"/><rect x="1831.30" y="142.93" width="1.25" height="1.3" fill="#abc9ff" fill-opacity="0.9"/><rect x="1801.30" y="148.55" width="2.50" height="1.3" fill="#ff7085" fill-opacity="0.9"/><rect x="1804.42" y="148.55" width="10.00" height="1.3" fill="#66e6ff" fill-opacity="0.9"/><rect x="1814.42" y="148.55" width="0.62" height="1.3" fill="#abc9ff" fill-opacity="0.9"/><rect x="1815.05" y="148.55" width="2.50" height="1.3" fill="#cdcfd2" fill-opacity="0.9"/><rect x="1817.55" y="148.55" width="0.62" height="1.3" fill="#abc9ff" fill-opacity="0.9"/><rect x="1818.80" y="148.55" width="1.88" height="1.3" fill="#42ffc2" fill-opacity="0.9"/><rect x="1820.67" y="148.55" width="0.62" height="1.3" fill="#abc9ff" fill-opacity="0.9"/><rect x="1821.92" y="148.55" width="3.75" height="1.3" fill="#cdcfd2" fill-opacity="0.9"/><rect x="1825.67" y="148.55" width="0.62" height="1.3" fill="#abc9ff" fill-opacity="0.9"/><rect x="1826.92" y="148.55" width="1.88" height="1.3" fill="#42ffc2" fill-opacity="0.9"/><rect x="1828.80" y="148.55" width="0.62" height="1.3" fill="#abc9ff" fill-opacity="0.9"/><rect x="1830.05" y="148.55" width="2.50" height="1.3" fill="#cdcfd2" fill-opacity="0.9"/><rect x="1832.55" y="148.55" width="0.62" height="1.3" fill="#abc9ff" fill-opacity="0.9"/><rect x="1833.80" y="148.55" width="3.12" height="1.3" fill="#8fffdb" fill-opacity="0.9"/><rect x="1836.92" y="148.55" width="0.62" height="1.3" fill="#abc9ff" fill-opacity="0.9"/><rect x="1838.17" y="148.55" width="1.25" height="1.3" fill="#abc9ff" fill-opacity="0.9"/><rect x="1840.05" y="148.55" width="2.50" height="1.3" fill="#42ffc2" fill-opacity="0.9"/><rect x="1842.55" y="148.55" width="0.62" height="1.3" fill="#abc9ff" fill-opacity="0.9"/><rect x="1803.80" y="150.43" width="1.88" height="1.3" fill="#ff7085" fill-opacity="0.9"/><rect x="1806.30" y="150.43" width="2.50" height="1.3" fill="#cdcfd2" fill-opacity="0.9"/><rect x="1809.42" y="150.43" width="1.25" height="1.3" fill="#abc9ff" fill-opacity="0.9"/><rect x="1811.30" y="150.43" width="6.88" height="1.3" fill="#cdcfd2" fill-opacity="0.9"/><rect x="1818.17" y="150.43" width="0.62" height="1.3" fill="#abc9ff" fill-opacity="0.9"/><rect x="1818.80" y="150.43" width="8.75" height="1.3" fill="#57b3ff" fill-opacity="0.9"/><rect x="1827.55" y="150.43" width="0.62" height="1.3" fill="#abc9ff" fill-opacity="0.9"/><rect x="1828.17" y="150.43" width="4.38" height="1.3" fill="#ffc2a6" fill-opacity="0.9"/><rect x="1832.55" y="150.43" width="0.62" height="1.3" fill="#abc9ff" fill-opacity="0.9"/><rect x="1833.80" y="150.43" width="6.88" height="1.3" fill="#ffc2a6" fill-opacity="0.9"/><rect x="1840.67" y="150.43" width="0.62" height="1.3" fill="#abc9ff" fill-opacity="0.9"/><rect x="1803.80" y="152.30" width="3.12" height="1.3" fill="#ff7085" fill-opacity="0.9"/><rect x="1807.55" y="152.30" width="3.75" height="1.3" fill="#cdcfd2" fill-opacity="0.9"/><rect x="1811.92" y="152.30" width="1.25" height="1.3" fill="#abc9ff" fill-opacity="0.9"/><rect x="1813.80" y="152.30" width="0.62" height="1.3" fill="#a1ffe0" fill-opacity="0.9"/><rect x="1803.80" y="154.18" width="1.88" height="1.3" fill="#ff7085" fill-opacity="0.9"/><rect x="1806.30" y="154.18" width="5.62" height="1.3" fill="#cdcfd2" fill-opacity="0.9"/><rect x="1812.55" y="154.18" width="1.25" height="1.3" fill="#abc9ff" fill-opacity="0.9"/><rect x="1814.42" y="154.18" width="3.75" height="1.3" fill="#a3a3f5" fill-opacity="0.9"/><rect x="1818.17" y="154.18" width="0.62" height="1.3" fill="#abc9ff" fill-opacity="0.9"/><rect x="1818.80" y="154.18" width="9.38" height="1.3" fill="#8fffdb" fill-opacity="0.9"/><rect x="1828.17" y="154.18" width="0.62" height="1.3" fill="#abc9ff" fill-opacity="0.9"/><rect x="1828.80" y="154.18" width="11.88" height="1.3" fill="#57b3ff" fill-opacity="0.9"/><rect x="1840.67" y="154.18" width="1.88" height="1.3" fill="#abc9ff" fill-opacity="0.9"/><rect x="1842.55" y="154.18" width="6.88" height="1.3" fill="#57b3ff" fill-opacity="0.9"/><rect x="1849.42" y="154.18" width="0.62" height="1.3" fill="#abc9ff" fill-opacity="0.9"/><rect x="1808.80" y="156.05" width="20.62" height="1.3" fill="#ffeda1" fill-opacity="0.9"/><rect x="1829.42" y="156.05" width="0.62" height="1.3" fill="#abc9ff" fill-opacity="0.9"/><rect x="1830.67" y="156.05" width="0.62" height="1.3" fill="#abc9ff" fill-opacity="0.9"/><rect x="1831.92" y="156.05" width="0.62" height="1.3" fill="#a1ffe0" fill-opacity="0.9"/><rect x="1833.17" y="156.05" width="0.62" height="1.3" fill="#abc9ff" fill-opacity="0.9"/><rect x="1834.42" y="156.05" width="5.00" height="1.3" fill="#57b3ff" fill-opacity="0.9"/><rect x="1839.42" y="156.05" width="0.62" height="1.3" fill="#abc9ff" fill-opacity="0.9"/><rect x="1840.05" y="156.05" width="0.62" height="1.3" fill="#a1ffe0" fill-opacity="0.9"/><rect x="1840.67" y="156.05" width="0.62" height="1.3" fill="#abc9ff" fill-opacity="0.9"/><rect x="1841.92" y="156.05" width="0.62" height="1.3" fill="#abc9ff" fill-opacity="0.9"/><rect x="1843.17" y="156.05" width="3.12" height="1.3" fill="#a1ffe0" fill-opacity="0.9"/><rect x="1846.30" y="156.05" width="0.62" height="1.3" fill="#abc9ff" fill-opacity="0.9"/><rect x="1847.55" y="156.05" width="0.62" height="1.3" fill="#abc9ff" fill-opacity="0.9"/><rect x="1848.80" y="156.05" width="3.75" height="1.3" fill="#cdcfd2" fill-opacity="0.9"/><rect x="1803.80" y="159.80" width="1.88" height="1.3" fill="#ff7085" fill-opacity="0.9"/><rect x="1806.30" y="159.80" width="1.88" height="1.3" fill="#cdcfd2" fill-opacity="0.9"/><rect x="1808.80" y="159.80" width="1.25" height="1.3" fill="#abc9ff" fill-opacity="0.9"/><rect x="1810.67" y="159.80" width="2.50" height="1.3" fill="#cdcfd2" fill-opacity="0.9"/><rect x="1813.17" y="159.80" width="0.62" height="1.3" fill="#abc9ff" fill-opacity="0.9"/><rect x="1813.80" y="159.80" width="5.00" height="1.3" fill="#bce0ff" fill-opacity="0.9"/><rect x="1803.80" y="161.68" width="1.88" height="1.3" fill="#cdcfd2" fill-opacity="0.9"/><rect x="1805.67" y="161.68" width="0.62" height="1.3" fill="#abc9ff" fill-opacity="0.9"/><rect x="1806.30" y="161.68" width="0.62" height="1.3" fill="#bce0ff" fill-opacity="0.9"/><rect x="1807.55" y="161.68" width="1.25" height="1.3" fill="#abc9ff" fill-opacity="0.9"/><rect x="1809.42" y="161.68" width="2.50" height="1.3" fill="#cdcfd2" fill-opacity="0.9"/><rect x="1811.92" y="161.68" width="0.62" height="1.3" fill="#abc9ff" fill-opacity="0.9"/><rect x="1812.55" y="161.68" width="2.50" height="1.3" fill="#bce0ff" fill-opacity="0.9"/><rect x="1815.05" y="161.68" width="0.62" height="1.3" fill="#abc9ff" fill-opacity="0.9"/><rect x="1815.67" y="161.68" width="0.62" height="1.3" fill="#bce0ff" fill-opacity="0.9"/><rect x="1816.92" y="161.68" width="0.62" height="1.3" fill="#abc9ff" fill-opacity="0.9"/><rect x="1818.17" y="161.68" width="0.62" height="1.3" fill="#abc9ff" fill-opacity="0.9"/><rect x="1818.80" y="161.68" width="2.50" height="1.3" fill="#cdcfd2" fill-opacity="0.9"/><rect x="1821.30" y="161.68" width="0.62" height="1.3" fill="#abc9ff" fill-opacity="0.9"/><rect x="1821.92" y="161.68" width="2.50" height="1.3" fill="#bce0ff" fill-opacity="0.9"/><rect x="1824.42" y="161.68" width="0.62" height="1.3" fill="#abc9ff" fill-opacity="0.9"/><rect x="1825.05" y="161.68" width="0.62" height="1.3" fill="#bce0ff" fill-opacity="0.9"/><rect x="1826.30" y="161.68" width="0.62" height="1.3" fill="#abc9ff" fill-opacity="0.9"/><rect x="1827.55" y="161.68" width="5.62" height="1.3" fill="#cdcfd2" fill-opacity="0.9"/><rect x="1833.17" y="161.68" width="0.62" height="1.3" fill="#abc9ff" fill-opacity="0.9"/><rect x="1834.42" y="161.68" width="0.62" height="1.3" fill="#abc9ff" fill-opacity="0.9"/><rect x="1835.67" y="161.68" width="0.62" height="1.3" fill="#a1ffe0" fill-opacity="0.9"/><rect x="1836.92" y="161.68" width="0.62" height="1.3" fill="#7d8187" fill-opacity="0.6"/><rect x="1838.17" y="161.68" width="3.75" height="1.3" fill="#7d8187" fill-opacity="0.6"/><rect x="1842.55" y="161.68" width="2.50" height="1.3" fill="#7d8187" fill-opacity="0.6"/><rect x="1845.67" y="161.68" width="6.88" height="1.3" fill="#7d8187" fill-opacity="0.6"/><rect x="1853.17" y="161.68" width="1.25" height="1.3" fill="#7d8187" fill-opacity="0.6"/><rect x="1855.05" y="161.68" width="5.00" height="1.3" fill="#7d8187" fill-opacity="0.6"/><rect x="1803.80" y="163.55" width="3.75" height="1.3" fill="#7d8187" fill-opacity="0.6"/><rect x="1808.17" y="163.55" width="1.25" height="1.3" fill="#7d8187" fill-opacity="0.6"/><rect x="1810.05" y="163.55" width="10.00" height="1.3" fill="#7d8187" fill-opacity="0.6"/><rect x="1820.67" y="163.55" width="7.50" height="1.3" fill="#7d8187" fill-opacity="0.6"/><rect x="1828.80" y="163.55" width="2.50" height="1.3" fill="#7d8187" fill-opacity="0.6"/><rect x="1803.80" y="165.43" width="1.88" height="1.3" fill="#ff7085" fill-opacity="0.9"/><rect x="1806.30" y="165.43" width="3.12" height="1.3" fill="#cdcfd2" fill-opacity="0.9"/><rect x="1810.05" y="165.43" width="1.25" height="1.3" fill="#abc9ff" fill-opacity="0.9"/><rect x="1811.92" y="165.43" width="2.50" height="1.3" fill="#cdcfd2" fill-opacity="0.9"/><rect x="1814.42" y="165.43" width="0.62" height="1.3" fill="#abc9ff" fill-opacity="0.9"/><rect x="1815.05" y="165.43" width="2.50" height="1.3" fill="#bce0ff" fill-opacity="0.9"/><rect x="1817.55" y="165.43" width="0.62" height="1.3" fill="#abc9ff" fill-opacity="0.9"/><rect x="1818.17" y="165.43" width="0.62" height="1.3" fill="#bce0ff" fill-opacity="0.9"/><rect x="1803.80" y="169.18" width="0.62" height="1.3" fill="#7d8187" fill-opacity="0.6"/><rect x="1805.05" y="169.18" width="2.50" height="1.3" fill="#c9ad88" fill-opacity="0.9"/><rect x="1808.17" y="169.18" width="3.75" height="1.3" fill="#7d8187" fill-opacity="0.6"/><rect x="1812.55" y="169.18" width="6.88" height="1.3" fill="#7d8187" fill-opacity="0.6"/><rect x="1820.05" y="169.18" width="4.38" height="1.3" fill="#7d8187" fill-opacity="0.6"/><rect x="1803.80" y="171.05" width="3.12" height="1.3" fill="#ff7085" fill-opacity="0.9"/><rect x="1807.55" y="171.05" width="6.88" height="1.3" fill="#cdcfd2" fill-opacity="0.9"/><rect x="1815.05" y="171.05" width="1.25" height="1.3" fill="#abc9ff" fill-opacity="0.9"/><rect x="1816.92" y="171.05" width="0.62" height="1.3" fill="#a1ffe0" fill-opacity="0.9"/><rect x="1803.80" y="172.93" width="1.88" height="1.3" fill="#ff7085" fill-opacity="0.9"/><rect x="1806.30" y="172.93" width="3.12" height="1.3" fill="#cdcfd2" fill-opacity="0.9"/><rect x="1810.05" y="172.93" width="1.25" height="1.3" fill="#abc9ff" fill-opacity="0.9"/><rect x="1811.92" y="172.93" width="6.88" height="1.3" fill="#cdcfd2" fill-opacity="0.9"/><rect x="1818.80" y="172.93" width="0.62" height="1.3" fill="#abc9ff" fill-opacity="0.9"/><rect x="1819.42" y="172.93" width="8.75" height="1.3" fill="#57b3ff" fill-opacity="0.9"/><rect x="1828.17" y="172.93" width="0.62" height="1.3" fill="#abc9ff" fill-opacity="0.9"/><rect x="1828.80" y="172.93" width="6.88" height="1.3" fill="#cdcfd2" fill-opacity="0.9"/><rect x="1835.67" y="172.93" width="0.62" height="1.3" fill="#abc9ff" fill-opacity="0.9"/><rect x="1803.80" y="174.80" width="1.88" height="1.3" fill="#ff7085" fill-opacity="0.9"/><rect x="1806.30" y="174.80" width="2.50" height="1.3" fill="#cdcfd2" fill-opacity="0.9"/><rect x="1809.42" y="174.80" width="1.25" height="1.3" fill="#abc9ff" fill-opacity="0.9"/><rect x="1811.30" y="174.80" width="1.88" height="1.3" fill="#a3a3f5" fill-opacity="0.9"/><rect x="1813.17" y="174.80" width="0.62" height="1.3" fill="#abc9ff" fill-opacity="0.9"/><rect x="1813.80" y="174.80" width="2.50" height="1.3" fill="#cdcfd2" fill-opacity="0.9"/><rect x="1816.92" y="174.80" width="0.62" height="1.3" fill="#abc9ff" fill-opacity="0.9"/><rect x="1818.17" y="174.80" width="3.12" height="1.3" fill="#cdcfd2" fill-opacity="0.9"/><rect x="1821.30" y="174.80" width="0.62" height="1.3" fill="#abc9ff" fill-opacity="0.9"/><rect x="1803.80" y="178.55" width="0.62" height="1.3" fill="#7d8187" fill-opacity="0.6"/><rect x="1805.05" y="178.55" width="4.38" height="1.3" fill="#7d8187" fill-opacity="0.6"/><rect x="1810.05" y="178.55" width="4.38" height="1.3" fill="#7d8187" fill-opacity="0.6"/><rect x="1815.05" y="178.55" width="1.88" height="1.3" fill="#7d8187" fill-opacity="0.6"/><rect x="1817.55" y="178.55" width="2.50" height="1.3" fill="#7d8187" fill-opacity="0.6"/><rect x="1820.67" y="178.55" width="1.25" height="1.3" fill="#7d8187" fill-opacity="0.6"/><rect x="1822.55" y="178.55" width="3.12" height="1.3" fill="#7d8187" fill-opacity="0.6"/><rect x="1826.30" y="178.55" width="3.12" height="1.3" fill="#7d8187" fill-opacity="0.6"/><rect x="1830.05" y="178.55" width="5.00" height="1.3" fill="#7d8187" fill-opacity="0.6"/><rect x="1835.67" y="178.55" width="3.12" height="1.3" fill="#7d8187" fill-opacity="0.6"/><rect x="1839.42" y="178.55" width="4.38" height="1.3" fill="#7d8187" fill-opacity="0.6"/><rect x="1844.42" y="178.55" width="2.50" height="1.3" fill="#7d8187" fill-opacity="0.6"/><rect x="1847.55" y="178.55" width="3.12" height="1.3" fill="#7d8187" fill-opacity="0.6"/><rect x="1851.30" y="178.55" width="4.38" height="1.3" fill="#7d8187" fill-opacity="0.6"/><rect x="1856.30" y="178.55" width="1.25" height="1.3" fill="#7d8187" fill-opacity="0.6"/><rect x="1858.17" y="178.55" width="4.38" height="1.3" fill="#7d8187" fill-opacity="0.6"/></svg>
<div class="abs" style="left:1905px;top:110px;width:7px;height:864px;background:#242930;border-radius:3.5px"></div>
<div class="abs" style="left:1904px;top:304px;width:7px;height:412px;background:#5d636c;border-radius:3.5px"></div>
</div></div>

<!-- status bar -->
<svg class="abs" style="left:263px;top:1012px" width="14" height="22" viewBox="0 0 14 22"><path d="M10.5 2.5 4 11.5l6.5 9" fill="none" stroke="#e8e8e8" stroke-width="2.4"/></svg>
<div class="vs" style="left:1681px;top:1004px;height:38px"></div>
<div class="vs" style="left:1756px;top:1004px;height:38px"></div>
<div class="vs" style="left:1869px;top:1004px;height:38px"></div>
<div class="st" style="left:1692.5px">100 %</div>
<div class="st" style="left:1761px">  33 :  12</div>
<div class="st" style="left:1873px">Tabs</div>
</div></body></html>
